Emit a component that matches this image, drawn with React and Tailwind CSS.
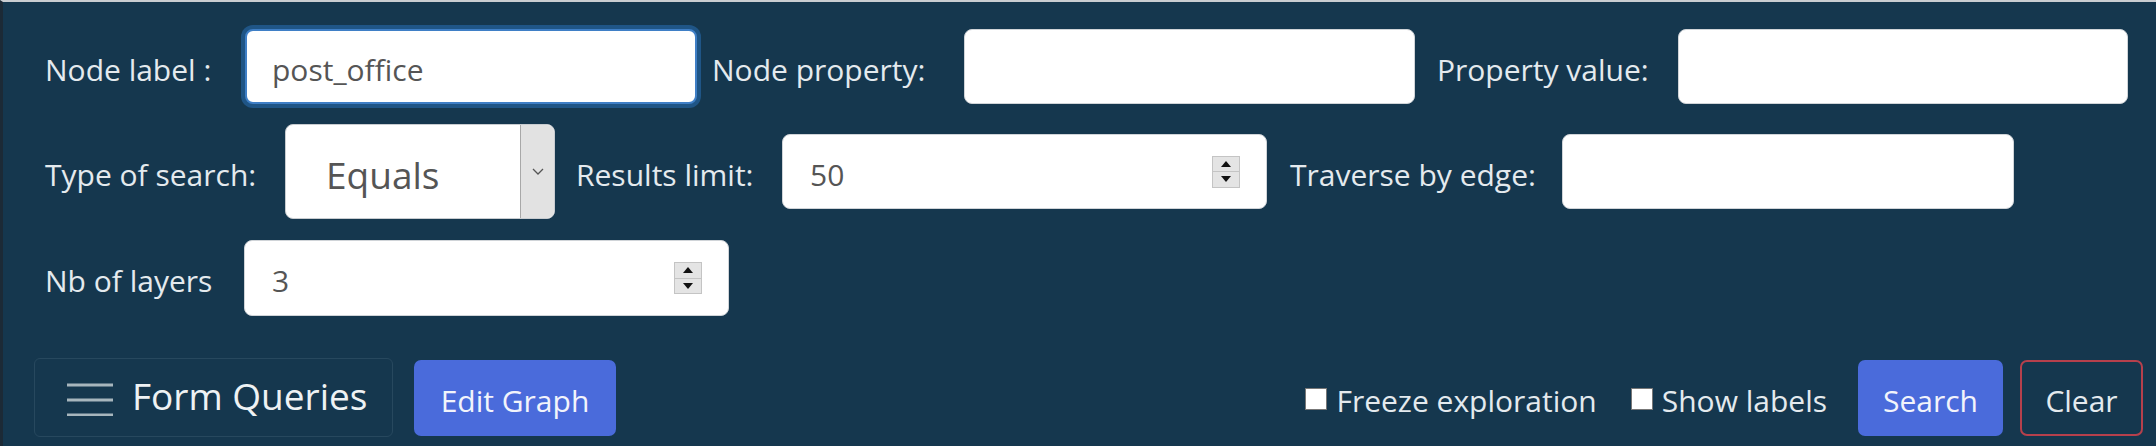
import React from "react";

const font = { fontFamily: '"Open Sans", "Noto Sans", sans-serif' };

function Spinner() {
  return (
    <div className="flex h-[32px] w-[28px] flex-col border border-[#c4c4c4] bg-[#e4e4e4]">
      <div className="flex flex-1 items-center justify-center border-b border-[#c4c4c4]">
        <svg width="10" height="6" viewBox="0 0 10 6"><polygon points="5,0 10,6 0,6" fill="#111" /></svg>
      </div>
      <div className="flex flex-1 items-center justify-center">
        <svg width="10" height="6" viewBox="0 0 10 6"><polygon points="0,0 10,0 5,6" fill="#111" /></svg>
      </div>
    </div>
  );
}

function TextBox({ w, value, focus }) {
  return (
    <div
      className={
        "flex h-[75px] shrink-0 items-center rounded-[8px] bg-white pl-[25px] pt-[5px] text-[30px] text-[#555] " +
        (focus ? "border-2 border-[#3f7fc6] ring-[4px] ring-[#1f5586]" : "border border-[#d0d4d8]")
      }
      style={{ width: w }}
    >
      {value}
    </div>
  );
}

function NumBox({ w, value, h }) {
  return (
    <div
      className="flex shrink-0 items-center justify-between rounded-[8px] border border-[#d0d4d8] bg-white pl-[27px] pr-[26px] text-[30px] text-[#555]"
      style={{ width: w, height: h }}
    >
      <span className="pt-[5px]">{value}</span>
      <Spinner />
    </div>
  );
}

function Label({ w, children }) {
  return (
    <div className="shrink-0 pt-[5px] text-[30px] text-[#e4eaee]" style={{ width: w }}>
      {children}
    </div>
  );
}

export default function App() {
  return (
    <div
      className="h-[446px] w-[2156px] overflow-hidden border-t-[2px] border-l-[3px] border-t-[#c9cdd1] border-l-[#1c2a36] bg-[#15374e]"
      style={font}
    >
      <div className="flex flex-col pl-[42px]">
        {/* Row 1 */}
        <div className="mt-[27px] flex h-[75px] items-center">
          <Label w={200}>Node label :</Label>
          <TextBox w={452} value="post_office" focus />
          <div className="w-[15px] shrink-0" />
          <Label w={252}>Node property:</Label>
          <TextBox w={451} />
          <div className="w-[22px] shrink-0" />
          <Label w={241}>Property value:</Label>
          <TextBox w={450} />
        </div>
        {/* Row 2 */}
        <div className="mt-[20px] flex h-[95px] items-center">
          <Label w={240}>Type of search:</Label>
          <div className="flex h-[95px] w-[270px] shrink-0 overflow-hidden rounded-[8px] border border-[#c8ccd0] bg-white">
            <div className="flex flex-1 items-center pl-[40px] pt-[6px] text-[37px] text-[#555]">Equals</div>
            <div className="flex w-[34px] items-center justify-center border-l border-[#a8a8a8] bg-[#e2e2e2]">
              <svg width="12" height="8" viewBox="0 0 12 8">
                <polyline points="1,1 6,6 11,1" fill="none" stroke="#555" strokeWidth="1.3" />
              </svg>
            </div>
          </div>
          <div className="w-[21px] shrink-0" />
          <Label w={206}>Results limit:</Label>
          <NumBox w={485} h={75} value="50" />
          <div className="w-[23px] shrink-0" />
          <Label w={272}>Traverse by edge:</Label>
          <TextBox w={452} />
        </div>
        {/* Row 3 */}
        <div className="mt-[21px] flex h-[76px] items-center">
          <Label w={199}>Nb of layers</Label>
          <NumBox w={485} h={76} value="3" />
        </div>
        {/* Row 4 */}
        <div className="mt-[43px] flex h-[77px] items-center">
          <div className="-ml-[11px] flex h-[79px] w-[359px] shrink-0 items-center rounded-[6px] border border-[#27485e] pl-[31px]">
            <svg width="48" height="36" viewBox="0 0 48 36" className="mr-[18px]">
              <line x1="1" y1="5" x2="47" y2="5" stroke="#a7b6bd" strokeWidth="3" />
              <line x1="1" y1="20" x2="47" y2="20" stroke="#a7b6bd" strokeWidth="3" />
              <line x1="1" y1="35" x2="47" y2="35" stroke="#a7b6bd" strokeWidth="3" />
            </svg>
            <span className="pb-[3px] text-[37px] text-[#eef2f4]">Form Queries</span>
          </div>
          <div className="ml-[21px] flex h-[76px] w-[202px] shrink-0 items-center justify-center rounded-[7px] bg-[#4a6bdb] pt-[5px] text-[30px] text-[#f2f4fb]">
            Edit Graph
          </div>
          <div className="flex-1" />
          <div className="flex items-center">
            <div className="mt-[3px] h-[22px] w-[22px] border border-[#777] bg-white" />
            <span className="ml-[9px] pt-[5px] text-[30px] text-[#e4eaee]">Freeze exploration</span>
          </div>
          <div className="ml-[34px] flex items-center">
            <div className="mt-[3px] h-[22px] w-[22px] border border-[#777] bg-white" />
            <span className="ml-[9px] pt-[5px] text-[30px] text-[#e4eaee]">Show labels</span>
          </div>
          <div className="ml-[31px] flex h-[76px] w-[145px] shrink-0 items-center justify-center rounded-[7px] bg-[#4a6bdb] pt-[5px] text-[30px] text-[#f2f4fb]">
            Search
          </div>
          <div className="ml-[17px] mr-[13px] flex h-[76px] w-[123px] shrink-0 items-center justify-center rounded-[7px] border-2 border-[#b6404c] pt-[5px] text-[30px] text-[#e4eaee]">
            Clear
          </div>
        </div>
      </div>
    </div>
  );
}
